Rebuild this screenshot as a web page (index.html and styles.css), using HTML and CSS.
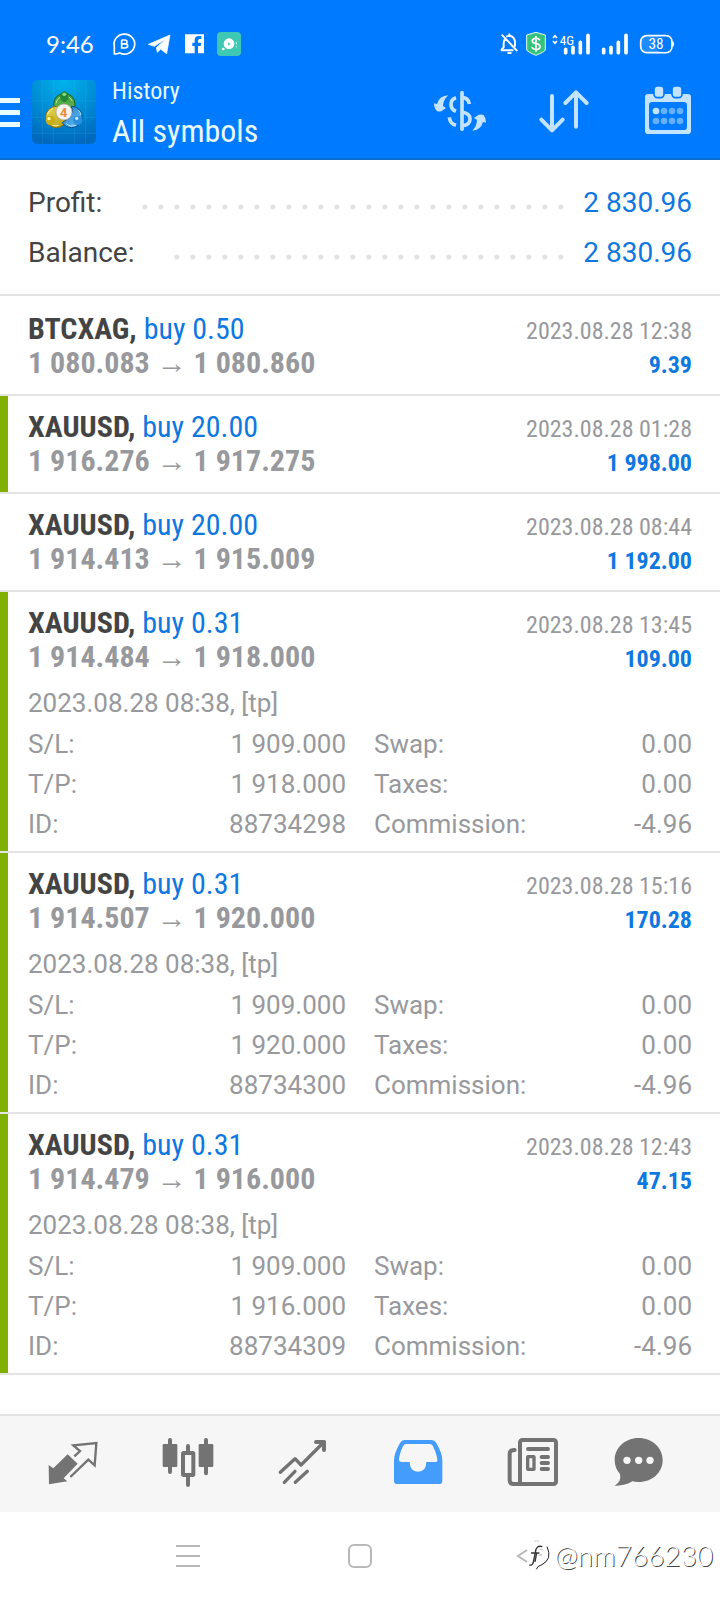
FILE: index.html
```html
<!DOCTYPE html>
<html lang="en">
<head>
<meta charset="utf-8">
<meta name="viewport" content="width=device-width, initial-scale=1">
<title>History</title>
<link rel="stylesheet" href="styles.css">
</head>
<body>
<div class="app">
  <div class="status">
    <div class="status-left">
      <span class="clock">9:46</span>
      <svg class="status-apps" width="130" height="28" viewBox="333 90 390 84" aria-hidden="true">
        <path d="M343 162V139A31 30 0 1 1 359 159Q352 162 343 162Z" fill="none" stroke="#fff" stroke-width="5" stroke-linejoin="round"/>
        <path d="M365 120V144H375Q383 144 383 137.500Q383 131.500 375 131.500H365M365 120H374Q381 120 381 126Q381 131.500 374 131.500" fill="none" stroke="#fff" stroke-width="5"/>
        <path d="M445 133L510 105L500 161L482 148L472 157L469 143L497 117L463 139Z" fill="#fff" stroke="#fff" stroke-width="2" stroke-linejoin="round"/>
        <path d="M555 103H612V160H594V138H602L604 128H594V122Q594 117 599 117H604V108H596Q584 108 584 121V128H577V138H584V160H555Z" fill="#fff"/>
        <rect x="651" y="96" width="72" height="72" rx="12" fill="#3fc8b4"/>
        <circle cx="687" cy="131" r="16" fill="#fff"/><circle cx="670" cy="147" r="4" fill="#fff"/>
        <path d="M683 127L691 131L685 137Z" fill="#3fc8b4"/><path d="M709 126V134M709 138V142" stroke="#b9f5ea" stroke-width="3"/>
      </svg>
    </div>
    <svg class="status-system" width="176" height="28" viewBox="420 90 528 84" aria-hidden="true">
      <g fill="none" stroke="#fff" stroke-width="6" stroke-linecap="round" stroke-linejoin="round">
        <path d="M436 115Q431 121 431 130V142L425 148V151H458M441 109Q445 107 448 107Q465 109 465 129V137M427 106L470 151M448 103V106"/>
        <path d="M445 159H452"/>
      </g>
      <path d="M528 97L556 105V150Q554 155 528 166Q502 155 500 150V105Z" fill="#35c37c" stroke="#dffbf0" stroke-width="3"/>
      <path d="M539 121Q538 115 528 115Q517 115 517 123Q517 129 528 131Q540 133 540 140Q540 148 528 148Q517 148 516 141M528 108V155" fill="none" stroke="#fff" stroke-width="5"/>
      <path d="M579 114L585 107L591 114M579 123L585 130L591 123" fill="none" stroke="#fff" stroke-width="5"/>
      <text class="net" x="599" y="135">4G</text>
      <path d="M617 148V158M639 142V158M661 127V158M684 106V158M731 148V158M753 142V158M775 127V158M798 106V158" stroke="#fff" stroke-width="11" stroke-linecap="round"/>
      <rect x="842" y="107" width="94" height="51" rx="18" fill="#1f8cff" stroke="#fff" stroke-width="5"/>
      <rect x="888" y="110" width="45" height="45" rx="14" fill="#007aff"/>
      <path d="M938 125Q942 132 938 139" fill="none" stroke="#fff" stroke-width="5"/>
      <text class="level" x="888" y="148" text-anchor="middle">38</text>
    </svg>
  </div>

  <header class="bar">
    <button class="menu" type="button" aria-label="Menu"><span></span><span></span><span></span></button>
    <svg class="logo" width="64" height="64" viewBox="96 240 192 192" role="img" aria-label="Trading terminal">
      <defs>
        <radialGradient id="sky" cx="50%" cy="0%" r="100%"><stop offset="0" stop-color="#00b4ee"/><stop offset="1" stop-color="#0069bd"/></radialGradient>
        <linearGradient id="green" x2="0" y2="1"><stop offset="0" stop-color="#3f9e40"/><stop offset="1" stop-color="#6dbb55"/></linearGradient>
        <linearGradient id="gold" x2="1" y2="1"><stop offset="0" stop-color="#e6dc5a"/><stop offset="1" stop-color="#b69a16"/></linearGradient>
        <linearGradient id="blue" x2="1" y2="1"><stop offset="0" stop-color="#2879c9"/><stop offset="1" stop-color="#64c4f6"/></linearGradient>
      </defs>
      <rect x="96" y="240" width="192" height="192" rx="16" fill="url(#sky)"/>
      <path d="M127 240V432M257 240V432M96 303H288M96 400H288M160 240V432M224 240V432M96 352H288" stroke="#5fd0f5" stroke-opacity=".22" stroke-width="2"/>
      <circle cx="193" cy="312" r="32" fill="url(#green)" stroke="#1a6427" stroke-width="3"/>
      <circle cx="169" cy="351" r="32" fill="url(#gold)" stroke="#7d6c13" stroke-width="3"/>
      <path d="M187 368A32 32 0 1 0 214 319Q226 345 187 368Z" fill="url(#blue)" stroke="#0c4c8d" stroke-width="3"/>
      <path d="M168 310A26 26 0 0 1 180 292M206 291A26 26 0 0 1 217 304" fill="none" stroke="#b9e9a0" stroke-width="3"/>
      <path d="M142 343A28 28 0 0 1 158 326M158 376Q166 379 176 376" fill="none" stroke="#fff29b" stroke-width="3"/>
      <path d="M199 371A26 26 0 0 0 228 375M236 331Q242 338 243 345" fill="none" stroke="#a6e3ff" stroke-width="3"/>
      <ellipse cx="193" cy="290" rx="12" ry="16" fill="#238835"/><ellipse cx="193" cy="283" rx="6" ry="5" fill="#8bd98a"/>
      <circle cx="151" cy="361" r="14" fill="#c9ad16"/><circle cx="147" cy="356" r="5" fill="#fff7a1"/>
      <circle cx="233" cy="361" r="14" fill="#2c8fdd"/><circle cx="230" cy="355" r="5" fill="#bbe9ff"/>
      <circle cx="192" cy="336" r="24" fill="#f7f3ee" stroke="#a7a590" stroke-width="2"/>
      <text class="logo-digit" x="191" y="350" text-anchor="middle">4</text>
    </svg>
    <div class="heading">
      <p class="kicker">History</p>
      <h1>All symbols</h1>
    </div>
    <button class="action" type="button" aria-label="Currency">
      <svg width="56" height="56" viewBox="216 252 168 168" fill="none" stroke="#c4e3ff" stroke-width="11">
        <path d="M306 278V388" stroke-linecap="round"/>
        <path d="M288 293Q273 297 273 313Q273 329 288 334M306 293Q325 293 328 312M306 336Q330 340 330 357Q330 375 306 378M268 352Q270 371 288 376"/>
        <path d="M222 310L231 312Q238 287 265 286Q250 299 249 318L258 324L244 334Q236 336 231 333Q222 325 222 310ZM378 368L369 366Q362 391 337 392Q350 379 351 360L342 354L356 344Q364 342 371 345Q378 353 378 368Z" fill="#c4e3ff" stroke="none"/>
      </svg>
    </button>
    <button class="action" type="button" aria-label="Sort">
      <svg width="56" height="56" viewBox="528 252 168 168" fill="none" stroke="#c4e3ff" stroke-width="12" stroke-linecap="round" stroke-linejoin="round">
        <path d="M576 288V391M544 359L576 391L608 359M648 380V277M616 309L648 277L680 309"/>
      </svg>
    </button>
    <button class="action" type="button" aria-label="Select period">
      <svg width="56" height="56" viewBox="840 252 168 168">
        <path fill="#c4e3ff" fill-rule="evenodd" d="M865 282H983Q993 282 993 292V392Q993 402 983 402H865Q855 402 855 392V292Q855 282 865 282ZM877 306Q867 306 867 316V380Q867 390 877 390H971Q981 390 981 380V316Q981 306 971 306Z"/>
        <g fill="#c4e3ff" stroke="#007aff" stroke-width="5"><rect x="882" y="258" width="30" height="35" rx="10"/><rect x="936" y="258" width="30" height="35" rx="10"/></g>
        <circle cx="888" cy="333" r="10" fill="#c4e3ff"/>
        <g fill="#66b0ff"><circle cx="912" cy="333" r="10"/><circle cx="936" cy="333" r="10"/><circle cx="960" cy="333" r="10"/><circle cx="888" cy="363" r="10"/><circle cx="912" cy="363" r="10"/><circle cx="936" cy="363" r="10"/><circle cx="960" cy="363" r="10"/></g>
      </svg>
    </button>
  </header>

  <main>
    <dl class="summary">
      <div><dt>Profit:</dt><dd>2 830.96</dd></div>
      <div><dt>Balance:</dt><dd>2 830.96</dd></div>
    </dl>
    <ul class="deals">
      <li><article class="deal">
        <div class="line"><h2>BTCXAG, <span class="side">buy 0.50</span></h2><time>2023.08.28 12:38</time></div>
        <div class="line"><p class="prices">1 080.083 <span class="arrow">→</span> 1 080.860</p><strong>9.39</strong></div>
      </article></li>
      <li><article class="deal marked">
        <div class="line"><h2>XAUUSD, <span class="side">buy 20.00</span></h2><time>2023.08.28 01:28</time></div>
        <div class="line"><p class="prices">1 916.276 <span class="arrow">→</span> 1 917.275</p><strong>1 998.00</strong></div>
      </article></li>
      <li><article class="deal">
        <div class="line"><h2>XAUUSD, <span class="side">buy 20.00</span></h2><time>2023.08.28 08:44</time></div>
        <div class="line"><p class="prices">1 914.413 <span class="arrow">→</span> 1 915.009</p><strong>1 192.00</strong></div>
      </article></li>
      <li><article class="deal marked open">
        <div class="line"><h2>XAUUSD, <span class="side">buy 0.31</span></h2><time>2023.08.28 13:45</time></div>
        <div class="line"><p class="prices">1 914.484 <span class="arrow">→</span> 1 918.000</p><strong>109.00</strong></div>
        <p class="note">2023.08.28 08:38, [tp]</p>
        <dl class="details">
          <div><dt>S/L:</dt><dd>1 909.000</dd></div><div><dt>Swap:</dt><dd>0.00</dd></div>
          <div><dt>T/P:</dt><dd>1 918.000</dd></div><div><dt>Taxes:</dt><dd>0.00</dd></div>
          <div><dt>ID:</dt><dd>88734298</dd></div><div><dt>Commission:</dt><dd>-4.96</dd></div>
        </dl>
      </article></li>
      <li><article class="deal marked open">
        <div class="line"><h2>XAUUSD, <span class="side">buy 0.31</span></h2><time>2023.08.28 15:16</time></div>
        <div class="line"><p class="prices">1 914.507 <span class="arrow">→</span> 1 920.000</p><strong>170.28</strong></div>
        <p class="note">2023.08.28 08:38, [tp]</p>
        <dl class="details">
          <div><dt>S/L:</dt><dd>1 909.000</dd></div><div><dt>Swap:</dt><dd>0.00</dd></div>
          <div><dt>T/P:</dt><dd>1 920.000</dd></div><div><dt>Taxes:</dt><dd>0.00</dd></div>
          <div><dt>ID:</dt><dd>88734300</dd></div><div><dt>Commission:</dt><dd>-4.96</dd></div>
        </dl>
      </article></li>
      <li><article class="deal marked open">
        <div class="line"><h2>XAUUSD, <span class="side">buy 0.31</span></h2><time>2023.08.28 12:43</time></div>
        <div class="line"><p class="prices">1 914.479 <span class="arrow">→</span> 1 916.000</p><strong>47.15</strong></div>
        <p class="note">2023.08.28 08:38, [tp]</p>
        <dl class="details">
          <div><dt>S/L:</dt><dd>1 909.000</dd></div><div><dt>Swap:</dt><dd>0.00</dd></div>
          <div><dt>T/P:</dt><dd>1 916.000</dd></div><div><dt>Taxes:</dt><dd>0.00</dd></div>
          <div><dt>ID:</dt><dd>88734309</dd></div><div><dt>Commission:</dt><dd>-4.96</dd></div>
        </dl>
      </article></li>
    </ul>
  </main>

  <nav class="tabs" aria-label="Sections">
    <button type="button" aria-label="Quotes">
      <svg width="64" height="64" viewBox="122 216 192 192">
        <path d="M148 315L162 325L205 283L235 311L193 355L204 364L149 373Z" fill="#737373"/>
        <path d="M225 289L242 273L222 256L291 249L286 316L267 299L213 351" fill="none" stroke="#737373" stroke-width="7"/>
      </svg>
    </button>
    <button type="button" aria-label="Charts">
      <svg width="64" height="64" viewBox="466 216 192 192">
        <path d="M511 240V336M619 240V340M565 258V278M565 346V375" stroke="#737373" stroke-width="12" stroke-linecap="round"/>
        <rect x="489" y="252" width="44" height="69" rx="4" fill="#737373"/><rect x="597" y="252" width="44" height="69" rx="4" fill="#737373"/>
        <rect x="550" y="279" width="31" height="66" rx="2" fill="#f6f6f6" stroke="#737373" stroke-width="12"/>
      </svg>
    </button>
    <button type="button" aria-label="Trade">
      <svg width="64" height="64" viewBox="812 216 192 192" fill="none" stroke="#737373" stroke-width="10" stroke-linecap="round" stroke-linejoin="round">
        <path d="M843 337L887 296L905 315L974 246M855 367L887 334M888 367L924 334"/><path d="M950 246H974V270" stroke-width="12"/>
      </svg>
    </button>
    <button type="button" aria-label="History" aria-current="page">
      <svg width="64" height="64" viewBox="76 216 192 192">
        <path fill="#449cfd" fill-rule="evenodd" d="M135 240H216Q225 240 230 249Q248 280 248 302V362Q248 372 238 372H113Q103 372 103 362V302Q103 280 121 249Q126 240 135 240ZM140 252Q133 252 130 259Q119 282 118 299Q118 306 125 306H150Q150 335 175 335Q200 335 200 306H227Q234 306 233 299Q231 282 220 259Q217 252 210 252Z"/>
      </svg>
    </button>
    <button type="button" aria-label="News">
      <svg width="64" height="64" viewBox="422 216 192 192" fill="none" stroke="#737373" stroke-width="12">
        <rect x="482" y="240" width="108" height="132" rx="7"/>
        <path d="M466 270Q451 270 451 281V361Q451 372 463 372H490M506 267H566M547 291H566M547 309H566M547 327H566" stroke-linecap="round"/>
        <rect x="505" y="290" width="19" height="38" stroke-width="10" rx="1"/>
      </svg>
    </button>
    <button type="button" aria-label="Messages">
      <svg width="64" height="64" viewBox="766 216 192 192">
        <path d="M837 234C878 234 909 264 909 300C909 339 876 366 837 366Q826 366 818 364Q796 378 765 377Q786 365 781 342Q765 324 765 300C765 264 796 234 837 234Z" fill="#737373"/>
        <g fill="#f6f6f6"><circle cx="802" cy="301" r="11"/><circle cx="837" cy="301" r="11"/><circle cx="871" cy="301" r="11"/></g>
      </svg>
    </button>
  </nav>

  <footer class="system">
    <button type="button" aria-label="Recent apps"><svg width="24" height="24" viewBox="0 0 24 24"><path d="M0 2H24M0 12H24M0 22H24" stroke="#b8b8b8" stroke-width="2"/></svg></button>
    <button type="button" aria-label="Home"><svg width="24" height="24" viewBox="0 0 24 24"><rect x="1" y="1" width="22" height="22" rx="5" fill="none" stroke="#b8b8b8" stroke-width="2"/></svg></button>
    <button type="button" aria-label="Back"><svg width="24" height="24" viewBox="0 0 24 24"><path d="M7 6L-2 12L7 18" fill="none" stroke="#b8b8b8" stroke-width="2"/></svg></button>
    <div class="watermark">
      <svg width="24" height="30" viewBox="0 0 72 90" aria-hidden="true">
        <path d="M34 6A36 36 0 0 1 35 78L26 88L24 74A36 36 0 0 1 34 6Z" fill="#fff"/>
        <path d="M60 20Q77 57 45 74Q30 78 28 88" fill="none" stroke="#222" stroke-width="3"/>
        <path d="M22 4Q30 1 36 4" fill="none" stroke="#ccc" stroke-width="3"/>
        <path d="M46 20Q28 14 25 37L19 66Q16 78 7 75M12 39H37M29 39L24 66" fill="none" stroke="#333" stroke-width="4"/>
        <path d="M38 28H48M34 45H45" stroke="#ccc" stroke-width="4"/>
      </svg>
      <span>@nm766230</span>
    </div>
  </footer>
</div>
</body>
</html>
```

FILE: styles.css
```css
* { box-sizing: border-box; }

body {
  margin: 0;
  background: #fff;
  color: #444;
  font-family: Roboto, "Liberation Sans", sans-serif;
}

h1, h2, p, dl, dd, ul { margin: 0; padding: 0; }
ul { list-style: none; }
svg { display: block; overflow: visible; flex: none; }

button {
  display: flex;
  align-items: center;
  justify-content: center;
  padding: 0;
  border: 0;
  background: none;
  cursor: pointer;
}

.app {
  display: flex;
  flex-direction: column;
  min-height: 100vh;
}

main { flex: 1; }

/* Status bar */
.status {
  display: flex;
  align-items: center;
  justify-content: space-between;
  height: 80px;
  padding: 8px 44px 0 46px;
  background: #007aff;
  color: #fff;
}

.status-left {
  display: flex;
  align-items: center;
  gap: 17px;
}

.clock {
  font-family: Lato, sans-serif;
  font-size: 24px;
  line-height: 28px;
}

.net { fill: #fff; font: 40px "Roboto Condensed", "Liberation Sans Narrow", Roboto, sans-serif; }
.level { fill: #fff; font: 46px "Roboto Condensed", Roboto, sans-serif; }
.logo-digit { fill: #f08a3c; font: bold 40px Roboto, sans-serif; }

/* App bar */
.bar {
  display: flex;
  align-items: center;
  height: 80px;
  padding-bottom: 14px;
  border-bottom: 2px solid #0c6cd2;
  background: #007aff;
  color: #e8fbff;
}

.menu {
  flex-direction: column;
  align-items: stretch;
  gap: 7px;
  width: 20px;
  margin-right: 12px;
}

.menu span { height: 5px; background: #e8fbff; }

.heading {
  flex: 1;
  min-width: 0;
  padding: 10px 0 0 16px;
  font-family: "Roboto Condensed", "Liberation Sans Narrow", Roboto, sans-serif;
  white-space: nowrap;
}

.kicker { font-size: 24px; line-height: 28px; }
h1 { font-size: 32px; font-weight: 400; line-height: 52px; }
.action { width: 104px; }

/* Totals */
.summary {
  padding: 18px 28px 16px;
  border-bottom: 2px solid #e4e4e4;
  font-size: 28px;
  line-height: 50px;
}

.summary div { display: flex; }

.summary div::before {
  content: "";
  order: 1;
  flex: 1;
  margin: 0 14px 0 34px;
  background: radial-gradient(circle, #e2e2e2 2px, transparent 3px) right top / 16px 58px;
}

.summary dd { order: 2; color: #0f78e0; }

/* Deals */
.deals { padding-top: 2px; }
.deals li { border-bottom: 2px solid #e4e4e4; }
.deal { padding: 14px 28px; }
.marked { padding-left: 20px; border-left: 8px solid #80b000; }
.open { padding-bottom: 7px; }

.line {
  display: flex;
  align-items: baseline;
  justify-content: space-between;
  height: 34px;
  font-family: "Roboto Condensed", "Liberation Sans Narrow", Roboto, sans-serif;
  font-size: 24px;
  line-height: 34px;
  white-space: nowrap;
}

h2, .prices { font-size: 30px; font-weight: 700; }
.side { color: #0f78e0; font-weight: 400; }
.prices, time { color: #97999c; }
.line strong { color: #0f78e0; }

.arrow {
  font-family: "Liberation Sans", sans-serif;
  font-weight: 400;
  line-height: 30px;
}

.note, .details {
  color: #97999c;
  font-size: 26px;
  line-height: 40px;
}

.note { margin: 9px 0 1px; }

.details {
  display: grid;
  grid-template-columns: 1fr 1fr;
  column-gap: 28px;
}

.details div { display: flex; justify-content: space-between; }

/* Bottom tabs */
.tabs {
  display: flex;
  padding: 16px 16px 16px 14px;
  border-top: 2px solid #e4e4e4;
  background: #f6f6f6;
}

.tabs button { flex: 1; }

/* System navigation */
.system {
  position: relative;
  display: flex;
  justify-content: center;
  height: 88px;
}

.system button { width: 172px; }

.watermark {
  position: absolute;
  right: 7px;
  bottom: 28px;
  display: flex;
  align-items: center;
  gap: 3px;
  color: #fff;
  font: 300 28px/34px Lato, sans-serif;
  text-shadow: 1px 1px 0 #444;
}
```
